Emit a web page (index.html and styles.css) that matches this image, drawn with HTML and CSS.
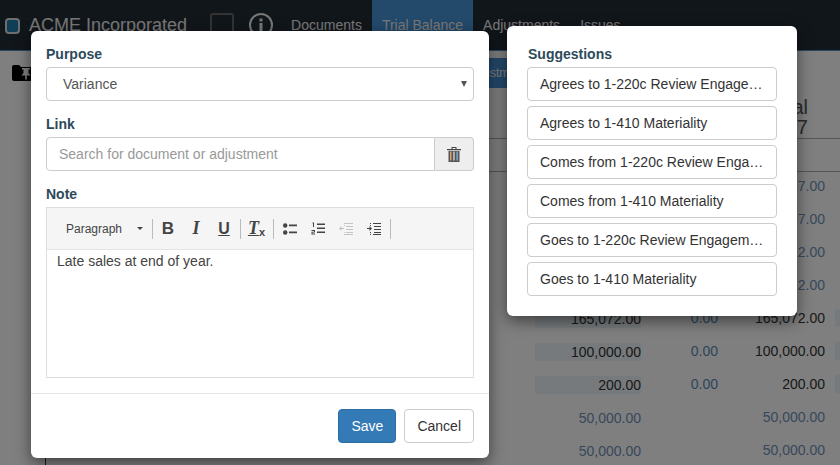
FILE: index.html
```html
<!DOCTYPE html>
<html lang="en">
<head>
    <meta charset="UTF-8">
    <title>Trial Balance</title>
    <link rel="stylesheet" href="styles.css">
</head>
<body>
    <!-- page behind the dialogs -->
    <nav class="navbar">
        <span class="brand-box"></span>
        <span class="brand">ACME Incorporated</span>
        <span class="nav-square"></span>
        <svg class="nav-info" width="24" height="24" viewBox="0 0 24 24">
            <circle cx="12" cy="12" r="11" fill="none" stroke="#eee" stroke-width="2"/>
            <rect x="10.5" y="10" width="3" height="8.5" fill="#eee"/>
            <rect x="10.5" y="5.5" width="3" height="3" fill="#eee"/>
        </svg>
        <a class="nav-link">Documents</a>
        <a class="nav-link active">Trial Balance</a>
        <a class="nav-link">Adjustments</a>
        <a class="nav-link">Issues</a>
    </nav>

    <div class="page-tools">
        <svg class="folder" width="24" height="16" viewBox="0 0 24 16">
            <path d="M0 2 Q0 0 2 0 H7 L9 2 H22 Q24 2 24 4 V14 Q24 16 22 16 H2 Q0 16 0 14 Z" fill="#000"/>
            <path d="M10 3 H18 V4.5 H16.5 V8 L18.5 10.5 H14.8 V14.5 H13.2 V10.5 H9.5 L11.5 8 V4.5 H10 Z" fill="#fff"/>
        </svg>
        <button class="tool-btn">Adjustments</button>
    </div>

    <div class="sheet">
        <div class="sheet-head">
            <div class="sheet-title">Total<br>2017</div>
        </div>
        <div class="sheet-sub"></div>
        <div class="row"><span class="cell">1,227.00</span><span class="cell adj"></span><span class="cell">1,227.00</span></div>
        <div class="row"><span class="cell">1,227.00</span><span class="cell adj"></span><span class="cell">1,227.00</span></div>
        <div class="row"><span class="cell">2,112.00</span><span class="cell adj"></span><span class="cell">2,112.00</span></div>
        <div class="row"><span class="cell">2,112.00</span><span class="cell adj"></span><span class="cell">2,112.00</span></div>
        <div class="row dark"><span class="cell shade">165,072.00</span><span class="cell adj">0.00</span><span class="cell">165,072.00</span><span class="end"></span></div>
        <div class="row dark"><span class="cell shade">100,000.00</span><span class="cell adj">0.00</span><span class="cell">100,000.00</span><span class="end"></span></div>
        <div class="row dark"><span class="cell shade">200.00</span><span class="cell adj">0.00</span><span class="cell">200.00</span><span class="end"></span></div>
        <div class="row"><span class="cell">50,000.00</span><span class="cell adj"></span><span class="cell">50,000.00</span></div>
        <div class="row"><span class="cell">50,000.00</span><span class="cell adj"></span><span class="cell">50,000.00</span></div>
    </div>

    <div class="backdrop"></div>

    <!-- note dialog -->
    <div class="dialog dialog-note">
        <div class="dialog-body">
            <div class="form-group">
                <label for="purpose">Purpose</label>
                <div class="select-wrapper">
                    <select id="purpose"><option>Variance</option></select>
                </div>
            </div>
            <div class="form-group">
                <label for="link">Link</label>
                <div class="input-group">
                    <input id="link" type="text" placeholder="Search for document or adjustment">
                    <span class="addon">
                        <svg width="14" height="16" viewBox="0 0 14 16">
                            <path d="M0 3 H14 V4.2 H0 Z M4.5 3 V1 H9.5 V3 H8.5 V2 H5.5 V3 Z" fill="#444"/>
                            <rect x="1.5" y="5" width="11" height="11" fill="#555"/>
                            <rect x="3" y="5.5" width="1.5" height="9" fill="#d9a066"/>
                            <rect x="6.2" y="5.5" width="1.5" height="9" fill="#c9c9c9"/>
                            <rect x="9.4" y="5.5" width="1.5" height="9" fill="#7fa8d0"/>
                        </svg>
                    </span>
                </div>
            </div>
            <div class="form-group">
                <label>Note</label>
                <div class="editor">
                    <div class="editor-toolbar">
                        <span class="format-select">Paragraph<i class="caret"></i></span>
                        <span class="sep"></span>
                        <span class="tb-btn tb-b">B</span>
                        <span class="tb-btn tb-i">I</span>
                        <span class="tb-btn tb-u">U</span>
                        <span class="sep"></span>
                        <span class="tb-btn tb-i tb-clear"><span class="tx-t">T</span><sub>x</sub></span>
                        <span class="sep wide"></span>
                        <span class="tb-btn">
                            <svg width="14" height="12" viewBox="0 0 14 12">
                                <circle cx="2.2" cy="2.5" r="2.2" fill="#444"/><circle cx="2.2" cy="9.5" r="2.2" fill="#444"/>
                                <path d="M6 1.5 H14 V3.2 H6 Z M6 8.5 H14 V10.2 H6 Z" fill="#444"/>
                            </svg>
                        </span>
                        <span class="tb-btn">
                            <svg width="14" height="13" viewBox="0 0 14 13">
                                <path d="M1.5 0.5 H3 V5 H2 V1.5 H1.5 Z M0.5 8 H4 V10.5 H1.5 V11.5 H4 V12.5 H0.5 V9.8 H3 V9 H0.5 Z" fill="#444"/>
                                <path d="M6 1.5 H14 V3 H6 Z M6 5.5 H14 V7 H6 Z M6 9.5 H14 V11 H6 Z" fill="#444"/>
                            </svg>
                        </span>
                        <span class="tb-btn">
                            <svg width="14" height="12" viewBox="0 0 14 12" fill="#c4c4c4">
                                <path d="M6 0 H14 V1 H6 Z M7 3 H14 V4 H7 Z M7 6 H14 V7 H7 Z M7 9 H14 V10 H7 Z M6 11 H14 V12 H6 Z"/>
                                <path d="M0 5.5 L2.5 3 V5 H5 V6 H2.5 V8 Z M5 0 H6 V1 H5 Z M5 2 H6 V3 H5 Z M5 9 H6 V10 H5 Z M5 11 H6 V12 H5 Z"/>
                            </svg>
                        </span>
                        <span class="tb-btn">
                            <svg width="14" height="12" viewBox="0 0 14 12" fill="#444">
                                <path d="M6 0 H14 V1 H6 Z M7 3 H14 V4 H7 Z M7 6 H14 V7 H7 Z M7 9 H14 V10 H7 Z M6 11 H14 V12 H6 Z"/>
                                <path d="M5 5.5 L2.5 3 V5 H0 V6 H2.5 V8 Z M3 0 H4 V1 H3 Z M3 2 H4 V3 H3 Z M3 9 H4 V10 H3 Z M3 11 H4 V12 H3 Z"/>
                            </svg>
                        </span>
                        <span class="sep"></span>
                    </div>
                    <div class="editor-content">Late sales at end of year.</div>
                </div>
            </div>
        </div>
        <div class="dialog-footer">
            <button class="btn btn-primary">Save</button>
            <button class="btn">Cancel</button>
        </div>
    </div>

    <!-- suggestions -->
    <div class="dialog dialog-suggest">
        <label class="suggest-label">Suggestions</label>
        <div class="suggest-list">
            <button class="suggest">Agrees to 1-220c Review Engagement Letter</button>
            <button class="suggest">Agrees to 1-410 Materiality</button>
            <button class="suggest">Comes from 1-220c Review Engagement Letter</button>
            <button class="suggest">Comes from 1-410 Materiality</button>
            <button class="suggest">Goes to 1-220c Review Engagement Letter</button>
            <button class="suggest">Goes to 1-410 Materiality</button>
        </div>
    </div>
</body>
</html>
```

FILE: styles.css
```css
* {
    box-sizing: border-box;
}

html, body {
    height: 100%;
}

body {
    margin: 0;
    overflow: hidden;
    background: #fff;
    color: #333;
    font-family: "Liberation Sans", Arial, sans-serif;
    font-size: 14px;
}

/* navbar */

.navbar {
    display: flex;
    align-items: center;
    height: 51px;
    padding-left: 5px;
    background: #222d36;
    border-bottom: 1px solid #4a90c8;
}

.brand-box {
    width: 15px;
    height: 16px;
    margin-top: 1px;
    border: 2px solid #ddd;
    border-radius: 4px;
    background: #1f7fae;
}

.brand {
    margin-left: 9px;
    color: #eee;
    font-size: 18px;
}

.nav-square {
    width: 24px;
    height: 24px;
    margin-left: 23px;
    border: 2px solid #666;
    border-radius: 3px;
}

.nav-info {
    margin-left: 15px;
}

.nav-link {
    display: flex;
    align-items: center;
    height: 50px;
    padding: 0 10px;
    color: #eee;
}

.nav-info + .nav-link {
    margin-left: 8px;
}

.nav-link.active {
    background: #4693d6;
}

/* page behind */

.page-tools {
    display: flex;
    align-items: center;
    height: 30px;
    margin-top: 7px;
    padding-left: 12px;
}

.tool-btn {
    height: 30px;
    margin-left: 410px;
    padding: 0 20px;
    border: 0;
    border-radius: 3px;
    background: #4693d6;
    color: #fff;
    font: 12px "Liberation Sans", Arial, sans-serif;
}

.sheet {
    height: 400px;
    margin-left: 45px;
    border-left: 1px solid #333;
}

.sheet-head {
    height: 51px;
    padding: 9px 32px 0 0;
    border-bottom: 1px solid #aaa;
    color: #555;
    text-align: right;
}

.sheet-title {
    font-size: 20px;
    line-height: 20px;
}

.sheet-sub {
    height: 33px;
    margin-bottom: -3px;
    border-bottom: 1px solid #aaa;
}

.row {
    display: flex;
    align-items: center;
    height: 33px;
    padding-left: 489px;
    color: #7090b8;
}

.row.dark {
    color: #333;
}

.cell {
    flex: none;
    width: 106px;
    height: 18px;
    line-height: 18px;
    text-align: right;
}

/* first column sits a pixel lower than the others */
.cell:first-child {
    margin-top: 2px;
}

.cell.adj {
    width: 77px;
    color: #5a8ab8;
}

.cell + .cell + .cell {
    width: 107px;
}

.cell.shade {
    background: #edf4f8;
}

.end {
    flex: none;
    width: 20px;
    height: 18px;
    margin-left: 10px;
    background: #edf4f8;
}

.backdrop {
    position: absolute;
    inset: 0;
    background: rgba(0, 0, 0, 0.5);
}

/* dialogs */

.dialog {
    position: absolute;
    border-radius: 6px;
    background: #fff;
    box-shadow: 0 5px 15px rgba(0, 0, 0, 0.5);
}

.dialog-note {
    top: 31px;
    left: 31px;
    width: 458px;
    height: 427px;
}

.dialog-suggest {
    top: 26px;
    left: 507px;
    width: 290px;
    height: 290px;
    padding: 20px;
}

.dialog-body {
    padding: 15px 15px 0;
}

label {
    display: block;
    margin-bottom: 5px;
    color: #2c4a5a;
    font-weight: bold;
    line-height: 16px;
}

.suggest-label {
    padding-left: 1px;
}

.form-group {
    margin-bottom: 15px;
}

.select-wrapper {
    position: relative;
}

.select-wrapper::after {
    content: "";
    position: absolute;
    top: 14px;
    right: 7px;
    border-left: 3px solid transparent;
    border-right: 3px solid transparent;
    border-top: 6px solid #555;
}

select {
    -webkit-appearance: none;
    appearance: none;
    display: block;
    width: 100%;
    height: 34px;
    padding: 0 16px;
    border: 1px solid #ccc;
    border-radius: 4px;
    background: #fff;
    color: #555;
    font: 14px "Liberation Sans", Arial, sans-serif;
}

.input-group {
    display: flex;
    height: 34px;
}

input {
    flex: 1;
    min-width: 0;
    padding: 0 12px;
    border: 1px solid #ccc;
    border-radius: 4px 0 0 4px;
    color: #555;
    font: 14px "Liberation Sans", Arial, sans-serif;
}

input::placeholder {
    color: #999;
    opacity: 1;
}

.addon {
    display: flex;
    align-items: center;
    justify-content: center;
    width: 39px;
    border: 1px solid #ccc;
    border-left: 0;
    border-radius: 0 4px 4px 0;
    background: #eee;
}

/* editor */

.editor {
    height: 171px;
    border: 1px solid #ddd;
}

.editor-toolbar {
    display: flex;
    align-items: center;
    height: 42px;
    padding-left: 19px;
    border-bottom: 1px solid #e4e4e4;
    background: #f5f5f5;
    color: #444;
}

.format-select {
    display: flex;
    align-items: center;
    width: 84px;
    font-size: 12px;
}

.caret {
    width: 0;
    height: 0;
    margin-left: 15px;
    border: 3px solid transparent;
    border-top-color: #444;
    border-bottom: 0;
}

.sep {
    width: 1px;
    height: 20px;
    margin: 0 1px 0 2px;
    background: #bbb;
}

.sep.wide {
    margin-right: 2px;
}

.tb-btn {
    display: flex;
    align-items: center;
    justify-content: center;
    width: 28px;
    height: 20px;
}

.tb-b {
    font-size: 17px;
    font-weight: bold;
}

.tb-i {
    font-family: "Liberation Serif", serif;
    font-size: 18px;
    font-style: italic;
    font-weight: bold;
}

.tb-u {
    font-size: 16px;
    font-weight: bold;
    text-decoration: underline;
}

.tb-clear {
    width: 29px;
}

.tx-t {
    text-decoration: underline;
}

.tb-clear sub {
    margin-top: 8px;
    font-family: "Liberation Sans", sans-serif;
    font-size: 11px;
    font-style: normal;
    font-weight: bold;
    line-height: 11px;
}

.editor-content {
    padding: 3px 10px;
    color: #444;
    line-height: 16px;
}

/* footer */

.dialog-footer {
    display: flex;
    justify-content: flex-end;
    gap: 8px;
    padding: 15px;
    border-top: 1px solid #e5e5e5;
}

.btn {
    height: 34px;
    padding: 0 12px;
    border: 1px solid #ccc;
    border-radius: 4px;
    background: #fff;
    color: #333;
    font: 14px "Liberation Sans", Arial, sans-serif;
}

.btn-primary {
    border-color: #2e6da4;
    background: #337ab7;
    color: #fff;
}

/* suggestions */

.suggest-list {
    display: flex;
    flex-direction: column;
    gap: 5px;
}

.suggest {
    overflow: hidden;
    width: 100%;
    height: 34px;
    padding: 0 12px;
    border: 1px solid #ccc;
    border-radius: 4px;
    background: #fff;
    color: #333;
    font: 14px "Liberation Sans", Arial, sans-serif;
    text-align: left;
    text-overflow: ellipsis;
    white-space: nowrap;
}
```
